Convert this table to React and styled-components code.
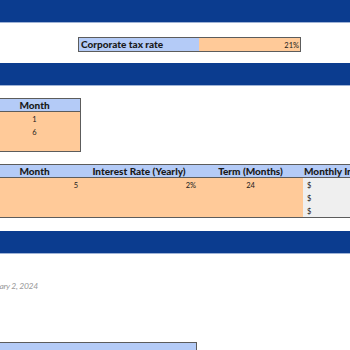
import React from 'react';
import styled, { createGlobalStyle } from 'styled-components';

const GlobalStyle = createGlobalStyle`
  html, body {
    margin: 0;
    padding: 0;
    background: #ffffff;
  }
  body {
    font-family: Lato, "Liberation Sans", sans-serif;
    color: #1a1a1a;
  }
`;

const Sheet = styled.div`
  width: 350px;
  height: 350px;
  overflow: hidden;
  display: flex;
  flex-direction: column;
  background: #ffffff;
`;

const Band = styled.div`
  flex: none;
  height: 22px;
  background: #0b3c8f;
  border-bottom: 1px solid #9fb3d6;
  margin-top: ${(p) => p.$gap || 0}px;
`;

const TaxRow = styled.div`
  display: flex;
  margin: 14px 0 0 78px;
  width: 221px;
  height: 13px;
  border: 1px solid #5c5c5c;
`;

const TaxLabel = styled.div`
  width: 118px;
  background: #b4cbf7;
  font-size: 10px;
  font-weight: 900;
  line-height: 13px;
  padding-left: 2px;
`;

const TaxValue = styled.div`
  flex: 1;
  background: #ffca99;
  font-size: 7.5px;
  line-height: 16px;
  text-align: right;
  padding-right: 1px;
`;

const Table = styled.div`
  flex: none;
  margin: 12px 0 0 -12px;
  width: ${(p) => p.$width}px;
  border: 1px solid #5c5c5c;
  display: grid;
  grid-template-columns: ${(p) => p.$cols};
`;

const Head = styled.div`
  background: #b4cbf7;
  height: 12px;
  font-size: 10px;
  font-weight: 900;
  line-height: 12px;
  text-align: ${(p) => p.$align || 'center'};
  padding-left: ${(p) => (p.$align === 'left' ? 1 : 0)}px;
  white-space: nowrap;
  overflow: hidden;
  border-bottom: 1px solid #5c5c5c;
`;

const Body = styled.div`
  background: ${(p) => (p.$grey ? '#efefef' : '#ffca99')};
  display: flex;
  flex-direction: column;
`;

const Cell = styled.div`
  height: 13px;
  font-size: 7.5px;
  line-height: 16px;
  text-align: ${(p) => p.$align || 'center'};
  padding: 0 ${(p) => (p.$align === 'right' ? 2 : 0)}px 0
    ${(p) => (p.$align === 'left' ? 4 : 0)}px;
`;

const DateNote = styled.div`
  margin: 27px 0 0 -16px;
  font-size: 8.5px;
  font-style: italic;
  color: #999999;
  letter-spacing: -0.3px;
  white-space: nowrap;
`;

const FooterBox = styled.div`
  margin: auto 0 0 -12px;
  width: 208px;
  height: 7px;
  background: #b4cbf7;
  border-top: 1px solid #5c5c5c;
  border-right: 1px solid #5c5c5c;
  flex: none;
`;

const loanRows = [['5', '2%', '24'], ['', '', ''], ['', '', '']];

export default function App() {
  return (
    <>
      <GlobalStyle />
      <Sheet>
        <Band />
        <TaxRow>
          <TaxLabel>Corporate tax rate</TaxLabel>
          <TaxValue>21%</TaxValue>
        </TaxRow>
        <Band $gap={11} />

        <Table $width={91} $cols="1fr">
          <Head>Month</Head>
          <Body>
            <Cell>1</Cell>
            <Cell>6</Cell>
            <Cell />
          </Body>
        </Table>

        <Table $width={420} $cols="91px 118px 105px 1fr">
          <Head>Month</Head>
          <Head>Interest Rate (Yearly)</Head>
          <Head>Term (Months)</Head>
          <Head $align="left">Monthly Interest</Head>
          <Body>
            {loanRows.map((r, i) => (
              <Cell key={i} $align="right">{r[0]}</Cell>
            ))}
          </Body>
          <Body>
            {loanRows.map((r, i) => (
              <Cell key={i} $align="right">{r[1]}</Cell>
            ))}
          </Body>
          <Body>
            {loanRows.map((r, i) => (
              <Cell key={i}>{r[2]}</Cell>
            ))}
          </Body>
          <Body $grey>
            {loanRows.map((r, i) => (
              <Cell key={i} $align="left">$</Cell>
            ))}
          </Body>
        </Table>

        <Band $gap={13} />
        <DateNote>January 2, 2024</DateNote>
        <FooterBox />
      </Sheet>
    </>
  );
}
